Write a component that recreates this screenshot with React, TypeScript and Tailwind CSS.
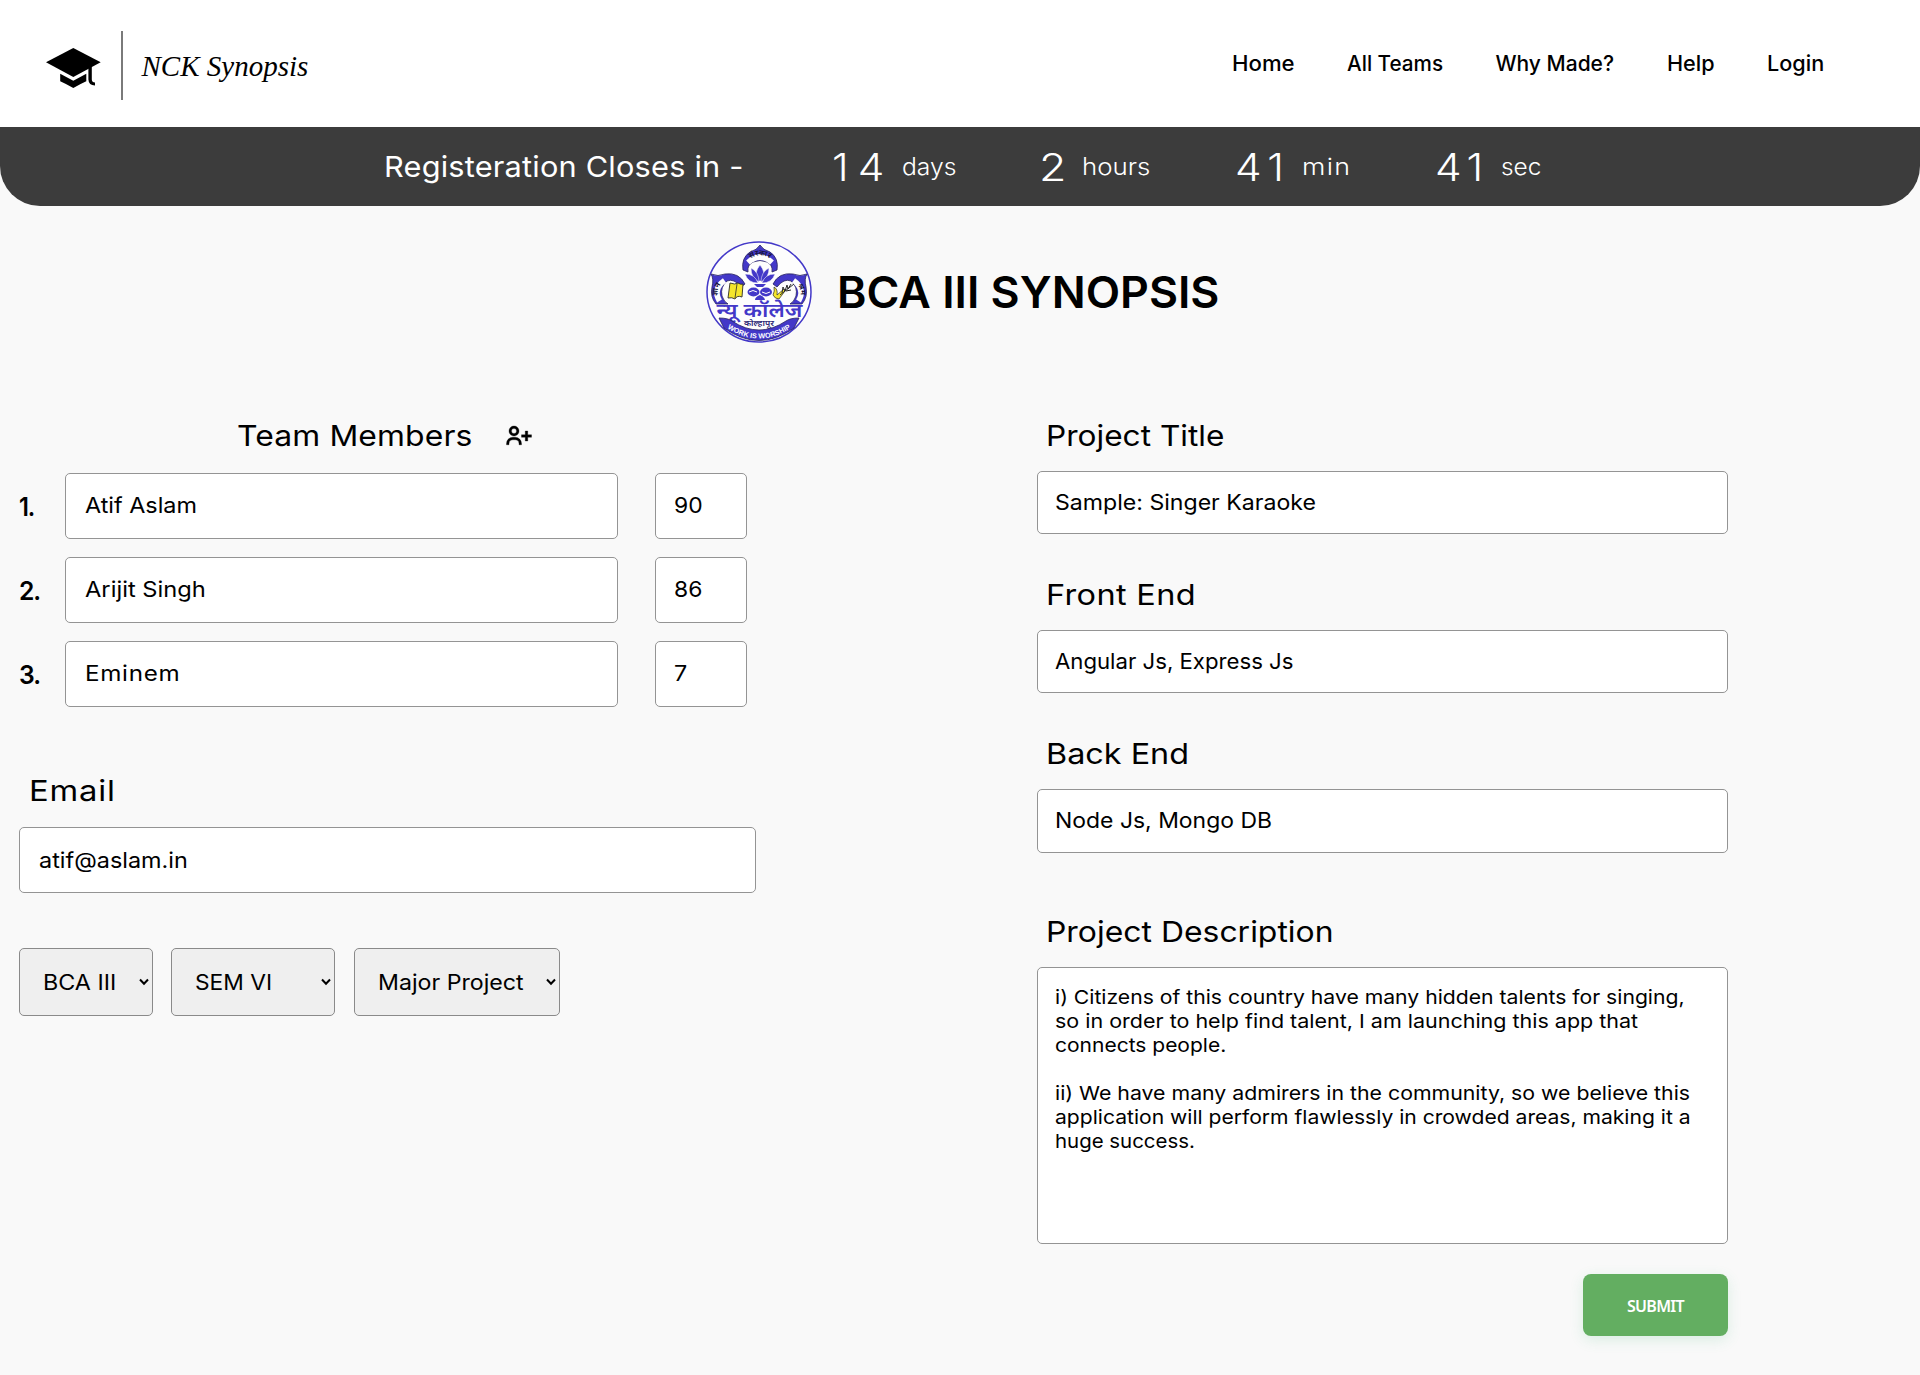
import React from 'react';

/* Text run: `className` carries size, weight, horizontal stretch and tracking. */
function T({ className, children }: { className: string; children: React.ReactNode }) {
  return <span className={`block w-fit origin-left whitespace-nowrap ${className}`}>{children}</span>;
}

function CapIcon() {
  return (
    <svg className="mt-[5px] h-[42px] w-[55px] shrink-0" viewBox="0 0 55 42" fill="#000">
      <path d="M27.3 1 0 15.2 27.3 30 54.7 15.2Z" />
      <path d="M14.2 26.8 27.3 33.8 40.3 26.8V34.2Q34.5 36.8 27.3 41 20 36.8 14.2 34.2Z" />
      <path d="M42.4 20.5 45.8 18.6V32.4Q45.9 35.2 49 35.6V38.4Q42.6 38.2 42.4 32.4Z" />
    </svg>
  );
}

function UserPlusIcon() {
  return (
    <svg className="h-[30px] w-[30px] shrink-0" viewBox="0 0 24 24" fill="#000" stroke="#000" strokeWidth="0.25">
      <path d="M19 8h-2v3h-3v2h3v3h2v-3h3v-2h-3zM4 8a3.91 3.91 0 0 0 4 4 3.91 3.91 0 0 0 4-4 3.91 3.91 0 0 0-4-4 3.91 3.91 0 0 0-4 4zm6 0a1.91 1.91 0 0 1-2 2 1.91 1.91 0 0 1-2-2 1.91 1.91 0 0 1 2-2 1.91 1.91 0 0 1 2 2zM4 18a3 3 0 0 1 3-3h2a3 3 0 0 1 3 3v1h2v-1a5 5 0 0 0-5-5H7a5 5 0 0 0-5 5v1h2z" />
    </svg>
  );
}

function Emblem() {
  const blue = '#4338c8';
  return (
    <svg className="h-[102px] w-[106px] shrink-0" viewBox="0 0 106 102">
      <defs>
        <path id="banner" d="M21 87Q53 108 85 87" />
        <path id="topArc" d="M40 21.5Q54 7 68 21.5" />
        <path id="leftArc" d="M14.5 62Q6 48 21 38.5" />
        <path id="rightArc" d="M85 38.5Q100 48 91.5 62" />
      </defs>
      <ellipse cx="53" cy="51" rx="52" ry="50" fill="#fdfdfd" stroke={blue} strokeWidth="1.5" />
      {/* petals */}
      <g fill={blue} stroke="#26215e" strokeWidth="0.8">
        <path d="M54 4Q57 9 64 11 73 17 71 29L66 31Q67 24 61 21 54 18 47 21 41 24 42 31L37 29Q35 17 44 11 51 9 54 4Z" />
        <path d="M5 33Q12 36 19 33 33 31 39 43L35 46Q28 37 21 40 14 46 16 55 18 61 22 63L10 63Q4 56 6 46 8 38 5 33Z" />
        <path d="M101 33Q94 36 87 33 73 31 67 43L71 46Q78 37 85 40 92 46 90 55 88 61 84 63L96 63Q102 56 100 46 98 38 101 33Z" />
      </g>
      {/* petal lettering bands */}
      <g fill="none" stroke="#fdfdfd" strokeWidth="5.5">
        <path d="M42 21.5Q54 10.5 66 21.5" />
        <path d="M13.5 60Q6.5 48 18.5 39.5" />
        <path d="M92.5 60Q99.5 48 87.5 39.5" />
      </g>
      <g fontFamily='"Noto Sans", "Noto Sans Devanagari", sans-serif' fontSize="7.5" fontWeight="700" fill="#17153d" textAnchor="middle">
        <text><textPath href="#topArc" startOffset="50%">संस्कार</textPath></text>
        <text><textPath href="#leftArc" startOffset="50%">ज्ञान</textPath></text>
        <text><textPath href="#rightArc" startOffset="50%">श्रम</textPath></text>
      </g>
      {/* lotus */}
      <g fill={blue} stroke="#fdfdfd" strokeWidth="0.5">
        <path d="M54 24Q60 31 57 40H51Q48 31 54 24Z" />
        <path d="M45 27Q53 31 53 41 45 37 45 27Z" />
        <path d="M63 27Q55 31 55 41 63 37 63 27Z" />
        <path d="M39 33Q49 33 52 42 42 42 39 33Z" />
        <path d="M69 33Q59 33 56 42 66 42 69 33Z" />
      </g>
      <path d="M48 43H60L57 46H51Z" fill={blue} />
      <g fill={blue}>
        <ellipse cx="47.5" cy="51" rx="6" ry="4.4" />
        <ellipse cx="60" cy="51" rx="6" ry="4.4" />
        <path d="M54 54q5 2 5 5h-10q0-3 5-5z" />
      </g>
      <path d="M43 51Q47 48 51 51M56 51Q60 54 64 51" stroke="#fff" strokeWidth="1" fill="none" />
      {/* book */}
      <path d="M24 42Q29 44 32 42 35 44 37 43L36 56Q31 54 29 58 26 56 22 57Z" fill="#f5e62c" stroke="#2a2a2a" strokeWidth="0.9" />
      <path d="M31 43 29 57" stroke="#2a2a2a" strokeWidth="0.8" />
      {/* quill */}
      <path d="M68 46Q72 48 71 54L78 48 79 50 73 58Q69 58 67 54 69 50 68 46Z" fill="#f5e62c" stroke="#2a2a2a" strokeWidth="0.7" />
      <path d="M74 54 88 43M76 52l1-6 2 4 2-6 1 4 3-5M80 50l5-1" fill="none" stroke="#2a2a2a" strokeWidth="1" />
      {/* name */}
      <g fontFamily='"Noto Sans", "Noto Sans Devanagari", sans-serif' fill={blue} textAnchor="middle">
        <text x="53.5" y="76" fontSize="19" fontWeight="600" textLength="86" lengthAdjust="spacingAndGlyphs">न्यू कॉलेज</text>
        <text x="53" y="85" fontSize="8.5" fontWeight="600" textLength="30" lengthAdjust="spacingAndGlyphs" fill="#2c2674">कोल्हापूर</text>
      </g>
      {/* motto ribbon */}
      <path d="M13 77Q22 77 26 80 53 98 80 80 84 77 93 77L88 87Q53 112 18 87Z" fill={blue} stroke="#26215e" strokeWidth="0.8" />
      <text fontFamily='"Liberation Sans", sans-serif' fontSize="7.2" fontWeight="700" fill="#fff" textAnchor="middle">
        <textPath href="#banner" startOffset="50%">WORK IS WORSHIP</textPath>
      </text>
    </svg>
  );
}

const box = 'flex items-center rounded-[5px] border border-[#949494] bg-white';
const field = 'text-[21.6px] font-normal';
const label = 'text-[29px] font-normal';

const nav = [
  ['Home', 'scale-x-[1.056]'],
  ['All Teams', 'scale-x-[0.985]'],
  ['Why Made?', 'scale-x-[1]'],
  ['Help', 'scale-x-[1.03]'],
  ['Login', 'scale-x-[1.03]'],
];

const timer = [
  ['14', 'scale-x-[1.1] tracking-[8.2px]', 'w-[70.5px]', 'days', 'scale-x-[1.05]'],
  ['2', 'scale-x-[1.16]', 'w-[43px]', 'hours', 'scale-x-[1.1]'],
  ['41', 'scale-x-[1.1] tracking-[5.8px]', 'w-[67.5px]', 'min', 'scale-x-[1.14] tracking-[1.2px]'],
  ['41', 'scale-x-[1.1] tracking-[5px]', 'w-[66px]', 'sec', 'scale-x-[1.04]'],
];

const members = [
  ['1.', 'scale-x-[0.9] tracking-[-1.2px]', 'Atif Aslam', 'scale-x-[1.083]', '90', 'scale-x-[1.06]'],
  ['2.', 'scale-x-[0.95] tracking-[-1.1px]', 'Arijit Singh', 'scale-x-[1.098]', '86', 'scale-x-[1.06]'],
  ['3.', 'scale-x-[0.95] tracking-[-1.1px]', 'Eminem', 'scale-x-[1.12] tracking-[0.62px]', '7', 'scale-x-[1.08]'],
];

const selects = [
  ['BCA III', 'scale-x-[1.08]', 'w-[134px]'],
  ['SEM VI', 'scale-x-[1.055]', 'w-[164px] ml-[18px]'],
  ['Major Project', 'scale-x-[1.073]', 'w-[206px] ml-[19px]'],
];

const project = [
  ['Project Title', 'scale-x-[1.09]', 'Sample: Singer Karaoke', 'scale-x-[1.07]', 'h-[63px] mb-[41px]'],
  ['Front End', 'scale-x-[1.12] tracking-[0.3px]', 'Angular Js, Express Js', 'scale-x-[1.027]', 'h-[63px] mb-[41px]'],
  ['Back End', 'scale-x-[1.115]', 'Node Js, Mongo DB', 'scale-x-[1.062]', 'h-[64px] mb-[59px]'],
];

const description = [
  ['i) Citizens of this country have many hidden talents for singing,', 'scale-x-[1.114]'],
  ['so in order to help find talent, I am launching this app that', 'scale-x-[1.131]'],
  ['connects people.', 'scale-x-[1.105]'],
  ['\u00a0', ''],
  ['ii) We have many admirers in the community, so we believe this', 'scale-x-[1.12]'],
  ['application will perform flawlessly in crowded areas, making it a', 'scale-x-[1.11]'],
  ['huge success.', 'scale-x-[1.075]'],
];

export default function App() {
  return (
    <div className="h-[1375px] w-[1920px] overflow-hidden bg-[#f9f9f9] font-['Inter',sans-serif] text-black">
      <header className="flex h-[127px] items-center justify-between bg-white">
        <div className="flex items-center pt-[4px] pl-[46px]">
          <CapIcon />
          <div className="ml-[20px] h-[69px] w-[2px] bg-[#7a7a7a]" />
          <T className="mt-[2px] ml-[18.5px] font-['Liberation_Serif',serif] text-[29px] italic">NCK Synopsis</T>
        </div>
        <nav className="grid w-[688.5px] grid-cols-[115px_149px_171px_100px_1fr]">
          {nav.map(([t, c]) => (
            <T key={t} className={`text-[21px] font-[550] ${c}`}>{t}</T>
          ))}
        </nav>
      </header>

      <section className="grid h-[79px] grid-cols-[447.5px_207.5px_195.5px_200.5px_1fr] items-center rounded-b-[40px] bg-[#3c3c3c] pl-[384px] text-white">
        <T className="scale-x-[1.06] text-[29px] font-normal tracking-[0.18px]">Registeration Closes in -</T>
        {timer.map(([n, nc, w, u, uc]) => (
          <div key={u} className="flex items-center">
            <div className={`shrink-0 ${w}`}>
              <T className={`text-[38.5px] leading-[46px] font-light ${nc}`}>{n}</T>
            </div>
            <T className={`text-[23.5px] font-light ${uc}`}>{u}</T>
          </div>
        ))}
      </section>

      <div className="flex h-[210px] items-start pt-[35px] pl-[706px]">
        <Emblem />
        <h1 className="ml-[25px] flex h-[102px] items-center">
          <T className="scale-x-[1.017] text-[44px] font-[580]">BCA III SYNOPSIS</T>
        </h1>
      </div>

      <main className="flex">
        <section className="w-[1019px] shrink-0 pl-[19px]">
          <div className="flex h-[39px] items-center pl-[217.5px]">
            <T className={`${label} w-[242px]! scale-x-[1.1] tracking-[0.1px]`}>Team Members</T>
            <div className="ml-[25.5px]"><UserPlusIcon /></div>
          </div>
          <div className="mt-[18px] flex flex-col gap-[18px]">
            {members.map(([n, nc, name, c, code, cc]) => (
              <div key={n} className="flex h-[66px] items-center">
                <div className="w-[46px] shrink-0"><T className={`text-[26px] font-semibold ${nc}`}>{n}</T></div>
                <div className={`${box} h-full w-[553px] pb-px pl-[18.5px]`}><T className={`${field} ${c}`}>{name}</T></div>
                <div className={`${box} ml-[37px] h-full w-[92px] pb-px pl-[18px]`}><T className={`${field} ${cc}`}>{code}</T></div>
              </div>
            ))}
          </div>
          <div className="mt-[64px] flex h-[39px] items-center pl-[9.5px]">
            <T className={`${label} scale-x-[1.13] tracking-[0.7px]`}>Email</T>
          </div>
          <div className={`${box} mt-[17px] h-[66px] w-[737px] pl-[18.5px]`}>
            <T className={`${field} scale-x-[1.084]`}>atif@aslam.in</T>
          </div>
          <div className="mt-[55px] flex">
            {selects.map(([t, c, w]) => (
              <div key={t} className={`flex h-[68px] items-center justify-between rounded-[5px] border border-[#8a8a8a] bg-[#efefef] pr-[3px] pl-[22.5px] ${w}`}>
                <T className={`${field} ${c}`}>{t}</T>
                <svg className="h-[8px] w-[10px] shrink-0" viewBox="0 0 10 8" fill="none" stroke="#000" strokeWidth="2">
                  <path d="M1 1.5 5 5.7 9 1.5" />
                </svg>
              </div>
            ))}
          </div>
        </section>

        <section className="ml-[18px] w-[691px]">
          {project.map(([l, lc, v, vc, h]) => (
            <div key={l}>
              <div className="flex h-[39px] items-center pl-[8.5px]"><T className={`${label} ${lc}`}>{l}</T></div>
              <div className={`${box} mt-[16px] pb-px pl-[16.5px] ${h}`}><T className={`${field} ${vc}`}>{v}</T></div>
            </div>
          ))}
          <div className="flex h-[39px] items-center pl-[8.5px]">
            <T className={`${label} scale-x-[1.1]`}>Project Description</T>
          </div>
          <div className="mt-[16px] h-[277px] rounded-[5px] border border-[#949494] bg-white pt-[18px] pl-[16.5px]">
            {description.map(([t, c], i) => (
              <T key={i} className={`text-[19px] leading-[24px] font-normal ${c}`}>{t}</T>
            ))}
          </div>
          <div className="mt-[30px] ml-auto flex h-[62px] w-[145px] items-center justify-center rounded-[8px] bg-[#63ae61] pt-px font-['Noto_Sans',sans-serif] shadow-[0_4px_14px_rgba(60,180,120,0.16)]">
            <span className="text-[16px] font-semibold tracking-[-0.7px] text-white">SUBMIT</span>
          </div>
        </section>
      </main>
    </div>
  );
}
